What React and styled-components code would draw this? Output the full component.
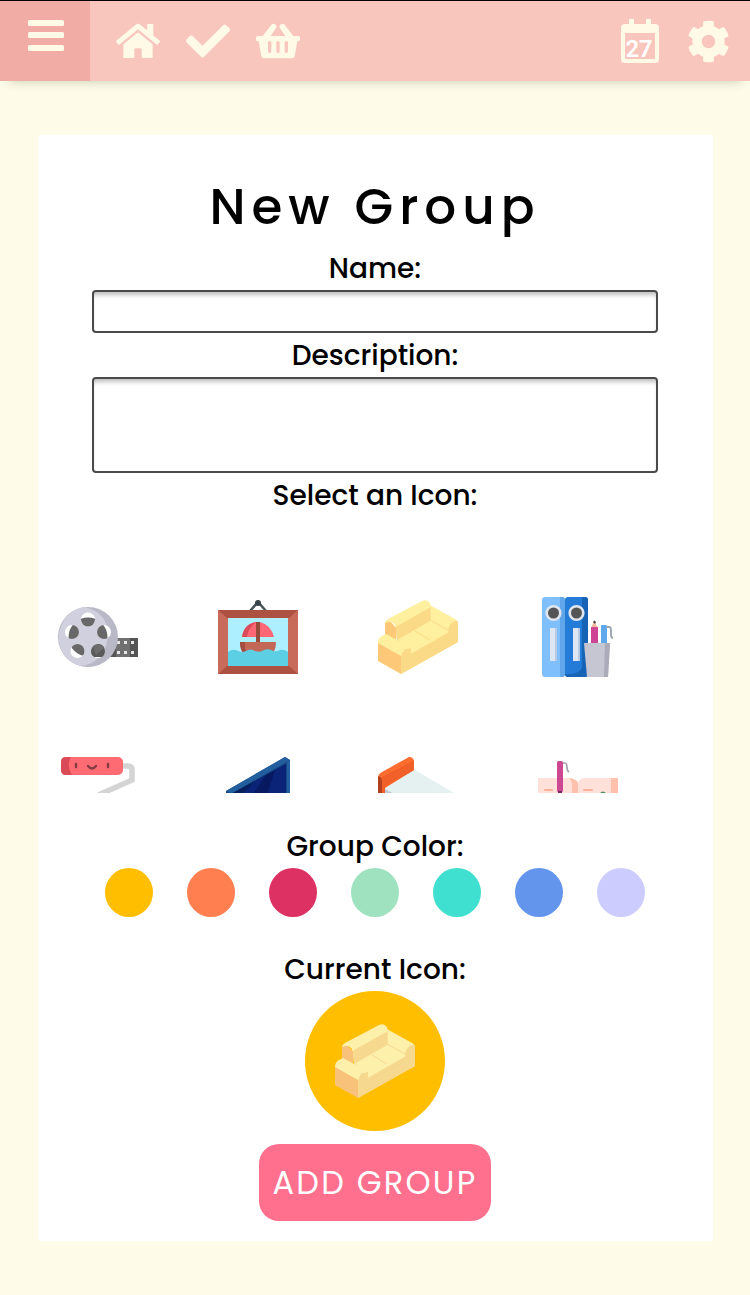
import React from "react";
import styled, { createGlobalStyle } from "styled-components";
import { FaHome, FaCheck, FaCog } from "react-icons/fa";

const GlobalStyle = createGlobalStyle`
  *, *::before, *::after { box-sizing: border-box; }
  body {
    margin: 0;
    background: #fefbe8;
    color: #000;
    font-family: Poppins, Inter, "Liberation Sans", sans-serif;
  }
`;

const Page = styled.div`
  min-height: 1295px;
  display: flex;
  flex-direction: column;
  border-top: 1px solid #000;
`;

const Header = styled.header`
  height: 80px;
  display: flex;
  align-items: center;
  background: #f9c6bd;
  color: #fefae6;
  box-shadow: 0 10px 9px -9px rgba(60, 90, 50, 0.25);
`;

const MenuButton = styled.button`
  width: 90px;
  height: 80px;
  padding: 18.5px 0 0 28px;
  border: 0;
  background: #f1aca5;
  display: flex;
  flex-direction: column;
  gap: 6.6px;
`;

const MenuBar = styled.span`
  width: 36px;
  height: 6px;
  border-radius: 1.5px;
  background: #fefae6;
`;

const NavLinks = styled.nav`
  flex: 1;
  display: flex;
  align-items: center;
  gap: 26px;
  padding-left: 26px;

  svg { display: block; }
`;

const HomeIcon = styled(FaHome)`
  width: 44px;
  height: 40px;
`;

const HeaderActions = styled.div`
  display: flex;
  align-items: center;
  gap: 27px;
  padding-right: 20px;

  svg { display: block; }
`;

const Card = styled.main`
  width: 675px;
  height: 1106px;
  margin: 54px auto 0;
  padding-top: 37px;
  border-radius: 3px;
  background: #fff;
  display: flex;
  flex-direction: column;
  align-items: center;
`;

const Title = styled.h1`
  margin: 0;
  height: 76px;
  line-height: 70px;
  font-size: 50px;
  font-weight: 500;
  letter-spacing: 6px;
`;

const Label = styled.label`
  height: 42px;
  line-height: 42px;
  font-size: 28px;
  font-weight: 500;
  white-space: nowrap;
`;

const fieldStyles = `
  display: block;
  width: 566px;
  border: 2px solid #4a4a4a;
  border-radius: 4px;
  background: #fff;
  box-shadow: inset 0 5px 4px -2px rgba(0, 0, 0, 0.25);
  resize: none;
  outline: none;
  flex: none;
`;

const NameInput = styled.input`
  ${fieldStyles}
  height: 43px;
  margin-bottom: 2px;
`;

const DescriptionInput = styled.textarea`
  ${fieldStyles}
  height: 96px;
  margin-bottom: 2px;
`;

const IconGrid = styled.div`
  width: 675px;
  height: 276px;
  margin-bottom: 33px;
  padding: 80px 0 0 20.5px;
  overflow: hidden;
  flex: none;
  display: grid;
  grid-template-columns: repeat(4, 80px);
  grid-auto-rows: 80px;
  gap: 80px;
`;

const Art = styled.svg`
  display: block;
  width: 80px;
  height: 80px;
  overflow: hidden;
`;

const Swatches = styled.div`
  display: flex;
  gap: 34px;
  height: 81px;
`;

const Swatch = styled.button`
  width: 48px;
  height: 49px;
  border: 0;
  border-radius: 50%;
  background: ${(p) => p.$color};
`;

const CurrentIcon = styled.div`
  width: 140px;
  height: 140px;
  border-radius: 50%;
  background: #ffbf00;
  display: flex;
  align-items: center;
  justify-content: center;
  flex: none;
`;

const AddButton = styled.button`
  width: 232px;
  height: 77px;
  margin-top: 13px;
  padding: 0;
  border: 0;
  border-radius: 20px;
  background: #ff708f;
  color: #fff;
  font-family: inherit;
  font-size: 32px;
  font-weight: 400;
  letter-spacing: 2.2px;
  white-space: nowrap;
`;

const BasketIcon = () => (
  <svg width="44" height="36" viewBox="0 0 132 108">
    <path
      fill="#fefae6"
      fillRule="evenodd"
      d="M5 39h15L45 7q5-7 12-3t3 12L44 39h44L72 16q-4-8 3-12t12 3l25 32h15q5 0 5 5v6q0 5-5 5h-3l-8 45q-1 6-7 6H23q-6 0-7-6L8 55H5q-5 0-5-5v-6q0-5 5-5M41 54q-5 0-5 5v26q0 5 5 5t5-5V59q0-5-5-5m25 0q-5 0-5 5v26q0 5 5 5t5-5V59q0-5-5-5m25 0q-5 0-5 5v26q0 5 5 5t5-5V59q0-5-5-5"
    />
  </svg>
);

const CalendarIcon = () => (
  <svg width="40" height="46" viewBox="0 0 40 46">
    <path fill="#fefae6" fillRule="evenodd" d="M9 1h5v5h12V1h5v5h4q4 0 4 4v31q0 4-4 4H5q-4 0-4-4V10q0-4 4-4h4zM5 15v26h30V15z" />
    <text x="19" y="39" textAnchor="middle" fontFamily="Roboto, sans-serif" fontSize="24" fontWeight="600" textLength="27" fill="#fff">27</text>
  </svg>
);

const Sofa = ({ muted }) => (
  <Art viewBox="0 0 80 80">
    <path fill={muted ? "#f7d88f" : "#fbda87"} d="M17 29 53 9v15l17 9 10-9v21L23 77V57L19 44z" />
    <path fill={muted ? "#fdf0aa" : "#fff0a0"} d="M52.700 8.500 78 22.500l2 3-10 9-17.300-11.500zM20 42.500l33-19L70.500 33v2.500L33 57z" />
    <path fill={muted ? "#f9c27a" : "#fdc978"} d="M7 25h6l5 6v13L7 38z" />
    <path fill={muted ? "#fdf0aa" : "#fff0a0"} d="M7 26q0-2 3-4L44 4q4-2 7 1 2 2 2 5L17.500 30q-2-7-10.500-4" />
    <path fill={muted ? "#f9c27a" : "#fdc978"} d="M0 45l23 13v19L0 64z" />
    <path fill={muted ? "#fdf0aa" : "#fff0a0"} d="M0 46q0-5 4-7l4-2 13 7 13 8q-6-1-8 1l-3 6z" />
    <path fill={muted ? "#f7d88f" : "#fbda87"} d="M23 60q2-8 10-9v6l37-21q0-10 7-12 3-1 3 3v18L23 77z" />
    <path d="M37 34l15 9M53 23.500 70 33M34 60l36-20" fill="none" stroke={muted ? "#f4d38b" : "#f8d580"} strokeWidth=".8" />
  </Art>
);

const FilmReel = () => (
  <Art viewBox="0 0 80 80">
    <clipPath id="reel-hub"><circle cx="30" cy="40" r="19.500" /></clipPath>
    <path fill="#555" d="M35 41h45v19H35z" />
    <path fill="#707070" d="M58 41h14v19H58z" />
    <path fill="#e5e5e7" d="M59 44h3v3h-3zM66 44h3v3h-3zM73 44h3v3h-3zM59 54h3v3h-3zM66 54h3v3h-3zM73 54h3v3h-3z" />
    <circle cx="30" cy="40" r="30" fill="#b9b8c7" />
    <path fill="#d1d0de" d="M27 10C5 12-7 40 7 59q8 9 17 10c18-3 26-18 26-33Q49 16 27 10" />
    <g fill="#fff">
      <circle cx="30" cy="22.500" r="7" /><circle cx="14" cy="35" r="7" /><circle cx="46" cy="35" r="7" /><circle cx="19.500" cy="54" r="7" /><circle cx="40" cy="54" r="7" />
    </g>
    <g fill="#686868" clipPath="url(#reel-hub)">
      <circle cx="30" cy="22.500" r="7" /><circle cx="14" cy="35" r="7" /><circle cx="46" cy="35" r="7" /><circle cx="19.500" cy="54" r="7" /><circle cx="40" cy="54" r="7" />
    </g>
    <path fill="#595959" d="M34 58q-2-5 1-7l5-4q7 1 7 7 0 4-3 6h-8z" />
    <path fill="#6c6c6c" d="m35 50 5-3q4 0 6 4l-8 7z" />
  </Art>
);

const Picture = () => (
  <Art viewBox="0 0 80 80">
    <path d="m32 14 8-9 8 9" fill="none" stroke="#46545a" strokeWidth="2.500" />
    <circle cx="40" cy="6" r="3" fill="#374249" />
    <path fill="#c86b5b" d="M0 13h80v64H0z" />
    <path fill="#ad5140" d="M0 13h80l-9 8H9zM0 77l9-8h62l9 8z" />
    <path fill="#aeefff" d="M10 21h60v48H10z" />
    <path fill="#ff6776" d="M24 40q2-13 14-15v15zM42 25q11 3 14 15H42z" />
    <path fill="#db4b59" d="M24 40q2-13 14-15-9 8-9 15z" />
    <path fill="#984b3b" d="M38 25h4v20h-4z" />
    <path fill="#c36857" d="M22 45h36q0 8-4 12H26q-4-4-4-12" />
    <path fill="#a44d40" d="M22 45h5q-1 6 2 12h-3q-4-4-4-12" />
    <path fill="#5dcfe4" d="M10 55q5-4 10-1 4 2 8 0 4-3 9 0 5 2 9-1 5-2 9 1 4 1 7-1 4-1 8 2v14H10z" />
  </Art>
);

const Binders = () => (
  <Art viewBox="0 0 80 80">
    <rect x="4" width="23" height="80" rx="3" fill="#7fc0fc" /><path fill="#5fa7ea" d="M22 0h2q3 0 3 3v74q0 3-3 3h-2z" />
    <rect x="27" width="23" height="80" rx="3" fill="#247bd8" /><path fill="#1764b7" d="M44 0h3q3 0 3 3v74q0 3-3 3H30q-3 0-3-3 15 1 17-7z" />
    <g fill="#555" stroke="#dfe5ee" strokeWidth="2.600"><circle cx="15.500" cy="16" r="6.800" /><circle cx="38.500" cy="16" r="6.800" /></g>
    <path fill="#dce6f5" d="M12 31h7v33h-7zM35 31h7v33h-7z" /><path fill="#b8cbe3" d="M17 31h2v33h-2zM40 31h2v33h-2z" />
    <path fill="#f7bc9d" d="m53 31 3-7 4 7z" /><path fill="#4b3b42" d="m55 25 1.500-1.500L58 25l-1 2z" />
    <path fill="#cf4595" d="M53 30h7v18h-7z" /><rect x="63" y="28" width="6" height="19" rx="1" fill="#5fa8ed" />
    <path fill="none" stroke="#9ca6b3" strokeWidth="1.900" d="M68 30h3q2 0 2 3v4q0 4 2 4" />
    <path fill="#c6c6d2" d="M46 46h26l-2 34H49z" /><path fill="#aaaab8" d="M67 46h5l-2 34h-4z" />
  </Art>
);

const Roller = () => (
  <Art viewBox="0 0 80 80">
    <path d="M65 9h5q4 0 4 4v10L36 40" fill="none" stroke="#d4d4d4" strokeWidth="5.500" />
    <rect x="3" y="0" width="62" height="18" rx="5" fill="#ff6b72" />
    <path fill="#db4b57" d="M8 0h5q-5 8 1 18H8q-5 0-5-5V5q0-5 5-5" />
    <path fill="none" stroke="#853c43" strokeWidth="2.400" strokeLinecap="round" d="M18 7v3M50 7v3M30 9q4 5 8 0" />
  </Art>
);

const Television = () => (
  <Art viewBox="0 0 80 80">
    <path fill="#174a85" d="M8 34 67 0l5 3v77H8z" /><path fill="#235f9f" d="M8 34 67 0l5 3L14 36z" />
    <path fill="#061e5b" d="M13 37 68 7v73H13z" /><path fill="#0b2478" d="m37 24 31-17v39H40q-9 0-16-9z" />
    <path fill="#071a61" d="m48 18 9-5-8 25H34z" /><path fill="#235f9f" d="M69 4h3v76h-3z" />
  </Art>
);

const Bed = () => (
  <Art viewBox="0 0 80 80">
    <path fill="#e5f1f1" d="m7 27 30-14 46 27v40H7z" /><path fill="#c5c7d9" d="m7 32 11 6v10H7z" />
    <path fill="#ff6d2e" d="M0 21q0-4 4-6L31 0q5 0 5 5v8L7 31v17H0z" />
    <path fill="#f2602a" d="m4 20 32-17v10L7 30v18H4z" /><path fill="#b5401f" d="M0 19q4 1 4 5v24H0z" />
  </Art>
);

const Notebook = () => (
  <Art viewBox="0 0 80 80">
    <path fill="#ffe1da" d="M0 21h31q6 0 9 4 3-4 7-4h33v59H0z" />
    <path fill="#ffc1ac" d="M31 21q8 1 9 6v15h-6V29q0-6-3-8M73 21h7v59h-7z" />
    <path fill="none" stroke="#fab19a" strokeWidth="2" strokeLinecap="round" d="M7 33h7M46 33h8" />
    <path fill="none" stroke="#a5a0ab" strokeWidth="1.700" d="M25 6h2q2 0 2 5 0 3 2 4" />
    <rect x="19" y="4" width="6" height="31" rx="1.500" fill="#cd4793" /><path fill="#752b60" d="M20 34h4v3h-4z" />
    <path fill="#47955a" d="M62 36q3-3 6 0z" />
  </Art>
);

const groupIcons = [FilmReel, Picture, Sofa, Binders, Roller, Television, Bed, Notebook];
const colors = ["#ffbf00", "#ff7f50", "#de3163", "#9fe2bf", "#40e0d0", "#6495ed", "#ccccff"];

export default function App() {
  return (
    <>
      <GlobalStyle />
      <Page>
        <Header>
          <MenuButton aria-label="Menu"><MenuBar /><MenuBar /><MenuBar /></MenuButton>
          <NavLinks>
            <HomeIcon />
            <FaCheck size={44} />
            <BasketIcon />
          </NavLinks>
          <HeaderActions><CalendarIcon /><FaCog size={43} /></HeaderActions>
        </Header>
        <Card>
          <Title>New Group</Title>
          <Label htmlFor="name">Name:</Label>
          <NameInput id="name" />
          <Label htmlFor="description">Description:</Label>
          <DescriptionInput id="description" />
          <Label as="div">Select an Icon:</Label>
          <IconGrid>{groupIcons.map((Icon, i) => <Icon key={i} />)}</IconGrid>
          <Label as="div">Group Color:</Label>
          <Swatches>
            {colors.map((color) => <Swatch key={color} $color={color} aria-label={color} />)}
          </Swatches>
          <Label as="div">Current Icon:</Label>
          <CurrentIcon><Sofa muted /></CurrentIcon>
          <AddButton>ADD GROUP</AddButton>
        </Card>
      </Page>
    </>
  );
}
